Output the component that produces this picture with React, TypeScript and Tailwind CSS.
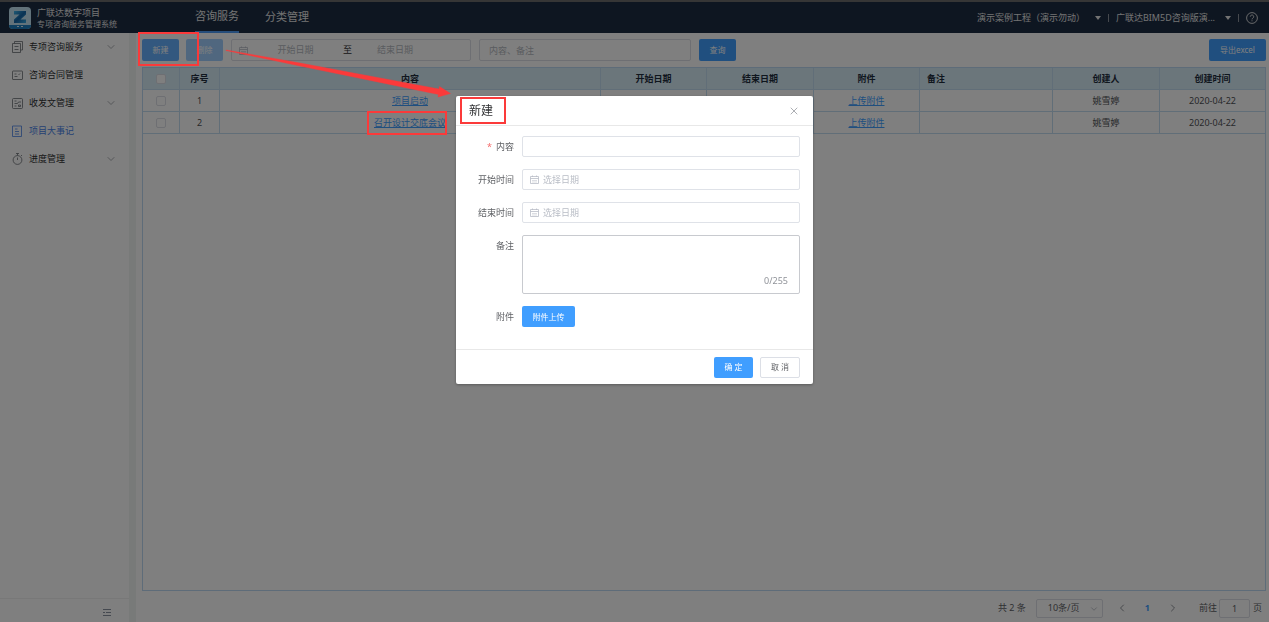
import type { ReactNode } from "react";
import { ChevronDown, ChevronLeft, ChevronRight, X } from "lucide-react";

const menu = [
  { label: "专项咨询服务", icon: "copy", children: true },
  { label: "咨询合同管理", icon: "contract", children: false },
  { label: "收发文管理", icon: "files", children: true },
  { label: "项目大事记", icon: "note", children: false, active: true },
  { label: "进度管理", icon: "timer", children: true },
];

const rows = [
  { id: 1, content: "项目启动", creator: "姚雪婷", created: "2020-04-22" },
  { id: 2, content: "召开设计交底会议", creator: "姚雪婷", created: "2020-04-22" },
];

const icons: Record<string, ReactNode> = {
  copy: (
    <>
      <path d="M3.500 2.500v-2h8v8.500h-2M1.500 2.500h8v9h-8z" />
      <path d="M3.500 5.500h4M3.500 8.500h4" />
    </>
  ),
  contract: (
    <>
      <rect x="1.5" y="2" width="10" height="8.500" rx=".5" />
      <path d="M3.500 5h2M3.500 7.500h3M7.500 6l1.500-1.500" />
    </>
  ),
  files: (
    <>
      <rect x="1.5" y="1.5" width="10" height="10" rx="1" />
      <path d="M3.500 4h2M3.500 6.500h3l1-1.500h2.500M7.500 8h2v1.500h-2zM3.500 9h2" />
    </>
  ),
  note: (
    <>
      <path d="M1.500 1h9v10.500h-9z" />
      <path d="M4 4h2.500M4 6.500h4M4 9h4" />
    </>
  ),
  timer: (
    <>
      <circle cx="6.500" cy="7" r="4.400" />
      <path d="M5 .5h3M6.500 .5v2M6.500 4.500V7M10 3l1-1" />
    </>
  ),
};

function MenuIcon({ name }: { name: string }) {
  return (
    <svg viewBox="0 0 12 12" className="size-3 shrink-0" fill="none" stroke="currentColor" strokeWidth="0.8">
      {icons[name]}
    </svg>
  );
}

function CalendarIcon() {
  return (
    <svg viewBox="0 0 9 9" className="size-[9px] shrink-0 text-[#b9bdc6]" fill="none" stroke="currentColor" strokeWidth="0.8">
      <path d="M.5 1.500h8v7h-8zM.5 3.500h8M2.500.5v1.500M6.500.5v1.500" />
      <path d="M2 5.500h5M2 7h5" strokeWidth="0.5" />
    </svg>
  );
}

function Logo() {
  return (
    <svg viewBox="0 0 22 22" className="size-[22px] shrink-0">
      <defs>
        <linearGradient id="logo-z" x1="0" y1="0" x2="1" y2="1">
          <stop offset="0" stopColor="#3fb4ea" />
          <stop offset="0.5" stopColor="#1565a8" />
          <stop offset="1" stopColor="#35a9e2" />
        </linearGradient>
      </defs>
      <rect width="22" height="22" rx="4" fill="#c4e4f4" />
      <path d="M0 18h22a4 4 0 0 1-4 4H4a4 4 0 0 1-4-4z" fill="#1c7fc0" />
      <path d="M5 4h12v3.500L11.500 12.500H17V16H5v-3.500L10.500 7.500H5z" fill="url(#logo-z)" />
      <path d="M8 19.500h2M12 19.500h2" stroke="#d8effa" />
    </svg>
  );
}

function Caret() {
  return (
    <svg viewBox="0 0 6 4" className="h-1 w-[6px]" fill="currentColor">
      <path d="M0 0h6L3 4z" />
    </svg>
  );
}

function Header() {
  return (
    <header className="flex h-[33px] shrink-0 items-center border-t-2 border-[#6c6c6c] bg-[#1c2c42] pr-[11px] pl-[9px] text-[#e6e6e6]">
      <Logo />
      <div className="ml-[6px] w-[158px]">
        <div className="text-[9px] leading-[12px]">广联达数字项目</div>
        <div className="text-[8px] leading-[10px]">专项咨询服务管理系统</div>
      </div>
      <nav className="flex h-full gap-[26px] text-[11px]">
        <a href="#service" className="flex items-center border-b-2 border-[#4c9bf5]">咨询服务</a>
        <a href="#category" className="flex items-center">分类管理</a>
      </nav>
      <div className="ml-auto flex items-center text-[9px]">
        <button type="button" className="flex items-center gap-[10px]">
          演示案例工程（演示勿动）
          <Caret />
        </button>
        <span className="mx-[7px] h-2 w-px bg-[#8c939c]" />
        <button type="button" className="flex items-center gap-[10px]">
          广联达BIM5D咨询版演...
          <Caret />
        </button>
        <span className="mx-[7px] h-2 w-px bg-[#8c939c]" />
        <button type="button" aria-label="帮助">
          <svg viewBox="0 0 12 12" className="size-3" fill="none" stroke="currentColor" strokeWidth="0.9">
            <circle cx="6" cy="6" r="5.400" />
            <path d="M4.300 4.700a1.700 1.700 0 1 1 2.600 1.400c-.6.400-.9.700-.9 1.300M6 8.300v1" />
          </svg>
        </button>
      </div>
    </header>
  );
}

function Sidebar() {
  return (
    <aside className="flex w-[136px] shrink-0 flex-col border-r-[7px] border-[#f0f4f2]">
      <nav className="flex-1 text-[9px] text-[#303133]">
        {menu.map((item) => (
          <a
            key={item.label}
            href="#menu"
            className={`flex h-7 items-center gap-[6px] pr-3 pl-[11px] ${item.active ? "text-[#4a83e8]" : ""}`}
          >
            <span className={item.active ? "" : "text-[#6b6e73]"}>
              <MenuIcon name={item.icon} />
            </span>
            {item.label}
            {item.children && <ChevronDown className="ml-auto size-3 text-[#909399]" strokeWidth={1.5} />}
          </a>
        ))}
      </nav>
      <div className="flex h-6 items-center justify-end border-t border-[#f0f0f0] pt-[3px] pr-[18px]">
        <button type="button" aria-label="收起菜单">
          <svg viewBox="0 0 8 7" className="h-[7px] w-2" fill="none" stroke="#8a93a0">
            <path d="M0 .5h8M3 3.500h5M0 6.500h8M0 3.500h2" />
          </svg>
        </button>
      </div>
    </aside>
  );
}

function Toolbar() {
  return (
    <div className="flex h-[22px] items-center text-[9px]">
      <button type="button" className="h-full w-[37px] rounded-xs bg-[#66b1ff] text-[8px] text-white">新建</button>
      <button type="button" disabled className="ml-[7px] h-full w-[37px] rounded-xs bg-[#a0cfff] text-[8px] text-white">
        删除
      </button>
      <div className="ml-2 flex h-full w-[240px] items-center rounded-xs border border-[#dcdfe6] px-[7px]">
        <CalendarIcon />
        <input aria-label="开始日期" placeholder="开始日期" className="w-[95px] text-center placeholder:text-[#b4b8c0]" />
        <span className="w-2 text-[#303133]">至</span>
        <input aria-label="结束日期" placeholder="结束日期" className="w-[88px] text-center placeholder:text-[#b4b8c0]" />
      </div>
      <input
        aria-label="内容、备注"
        placeholder="内容、备注"
        className="ml-2 h-full w-[212px] rounded-xs border border-[#dcdfe6] px-[9px] placeholder:text-[#b4b8c0]"
      />
      <button type="button" className="ml-2 h-full w-[37px] rounded-xs bg-[#409eff] text-[8px] text-white">查询</button>
      <button type="button" className="ml-auto h-full w-[57px] rounded-xs bg-[#409eff] text-[8px] text-white">
        导出excel
      </button>
    </div>
  );
}

const cell = "h-[22px] border-r border-b border-[#c3dcf0] p-0";

function Check({ label }: { label: string }) {
  return (
    <input
      type="checkbox"
      aria-label={label}
      className="mx-auto block size-[10px] appearance-none rounded-xs border border-[#dcdfe6] bg-white"
    />
  );
}

function EventTable() {
  return (
    <div className="mt-[6px] flex-1 border border-[#bcd9f2]">
      <table className="w-full table-fixed border-separate border-spacing-0 text-center text-[9px] text-[#505256]">
        <colgroup>
          <col className="w-[37px]" />
          <col className="w-[40px]" />
          <col />
          <col className="w-[106px]" />
          <col className="w-[107px]" />
          <col className="w-[106px]" />
          <col className="w-[133px]" />
          <col className="w-[107px]" />
          <col className="w-[105px]" />
        </colgroup>
        <thead className="bg-[#d6ecf7] text-[#1f2d3d]">
          <tr>
            <th className={cell}><Check label="全选" /></th>
            <th className={cell}>序号</th>
            <th className={cell}>内容</th>
            <th className={cell}>开始日期</th>
            <th className={cell}>结束日期</th>
            <th className={cell}>附件</th>
            <th className="h-[22px] border-r border-b border-[#c3dcf0] p-0 pl-[7px] text-left">备注</th>
            <th className={cell}>创建人</th>
            <th className="h-[22px] border-b border-[#c3dcf0] p-0">创建时间</th>
          </tr>
        </thead>
        <tbody>
          {rows.map((row) => (
            <tr key={row.id}>
              <td className={cell}><Check label={`选择第${row.id}行`} /></td>
              <td className={cell}>{row.id}</td>
              <td className={cell}><a href="#detail" className="text-[#409eff] underline">{row.content}</a></td>
              <td className={cell} />
              <td className={cell} />
              <td className={cell}><a href="#upload" className="text-[#409eff] underline">上传附件</a></td>
              <td className={cell} />
              <td className={cell}>{row.creator}</td>
              <td className="h-[22px] border-b border-[#c3dcf0] p-0">{row.created}</td>
            </tr>
          ))}
        </tbody>
      </table>
    </div>
  );
}

function Pagination() {
  return (
    <div className="flex h-[31px] items-center justify-end pt-[3px] pr-1 text-[9px] text-[#606266]">
      <span>共 2 条</span>
      <div className="relative ml-[10px]">
        <select
          aria-label="每页条数"
          className="block h-[19px] w-[67px] appearance-none rounded-xs border border-[#dcdfe6] pl-[11px]"
        >
          <option>10条/页</option>
        </select>
        <ChevronDown className="pointer-events-none absolute top-[5px] right-1 size-[10px] text-[#b4b8c0]" />
      </div>
      <button type="button" aria-label="上一页" className="ml-[13px]"><ChevronLeft className="size-3 text-[#909399]" /></button>
      <button type="button" className="mx-[17px] font-bold text-[#409eff]">1</button>
      <button type="button" aria-label="下一页"><ChevronRight className="size-3 text-[#909399]" /></button>
      <label className="ml-5 flex items-center gap-[2px]">
        前往
        <input defaultValue="1" className="h-[19px] w-[31px] rounded-xs border border-[#dcdfe6] text-center" />
        <span className="ml-px">页</span>
      </label>
    </div>
  );
}

function Field({ id, label, required, children }: { id: string; label: string; required?: boolean; children: ReactNode }) {
  return (
    <div className="flex items-start">
      <label htmlFor={id} className="w-[66px] shrink-0 pr-2 text-right leading-[21px]">
        {required && <span className="mr-1 text-[#f56c6c]">*</span>}
        {label}
      </label>
      {children}
    </div>
  );
}

function DateInput({ id }: { id: string }) {
  return (
    <div className="flex h-[21px] flex-1 items-center gap-1 rounded-xs border border-[#dfe2e8] px-[7px]">
      <CalendarIcon />
      <input id={id} placeholder="选择日期" className="min-w-0 flex-1 placeholder:text-[#b9bdc6]" />
    </div>
  );
}

function CreateDialog() {
  return (
    <div className="fixed inset-0 flex items-start justify-center bg-black/50 pt-24">
      <form
        role="dialog"
        aria-label="新建"
        className="w-[357px] rounded-xs bg-white text-[9px] text-[#606266] shadow-[0_1px_3px_rgba(0,0,0,0.3)]"
      >
        <div className="flex h-[30px] items-center justify-between border-b border-[#e8e8e8] px-[13px]">
          <h2 className="text-[12px] text-[#303133]">新建</h2>
          <button type="button" aria-label="关闭"><X className="size-3 text-[#909399]" strokeWidth={1.5} /></button>
        </div>
        <div className="flex flex-col gap-3 pt-[10px] pr-[13px] pb-[22px]">
          <Field id="content" label="内容" required>
            <input id="content" className="h-[21px] min-w-0 flex-1 rounded-xs border border-[#dfe2e8] px-2" />
          </Field>
          <Field id="start" label="开始时间"><DateInput id="start" /></Field>
          <Field id="end" label="结束时间"><DateInput id="end" /></Field>
          <Field id="remark" label="备注">
            <div className="relative flex-1">
              <textarea id="remark" className="block h-[59px] w-full resize-none rounded-xs border border-[#c8cacf] p-2" />
              <span className="absolute right-3 bottom-[7px] leading-[12px] text-[#909399]">0/255</span>
            </div>
          </Field>
          <Field id="upload" label="附件">
            <button id="upload" type="button" className="h-[21px] w-[53px] rounded-xs bg-[#409eff] text-[8px] text-white">
              附件上传
            </button>
          </Field>
        </div>
        <div className="flex h-[35px] items-center justify-end gap-[7px] border-t border-[#e8e8e8] pr-[13px] text-[8px]">
          <button type="button" className="h-[21px] w-[39px] rounded-xs bg-[#409eff] text-white">确 定</button>
          <button type="button" className="h-[21px] w-10 rounded-xs border border-[#dcdfe6]">取 消</button>
        </div>
      </form>
    </div>
  );
}

function Annotations() {
  return (
    <svg className="pointer-events-none absolute top-0 left-0" width="520" height="140" fill="none" stroke="#fb3a3a" strokeWidth="2">
      <rect x="139" y="33" width="59" height="32" />
      <rect x="368" y="112" width="78" height="22" />
      <rect x="461" y="98" width="44" height="25" />
      <path d="M226 50L300 63l139 26 .5-2.500 11 7-12.500 3.500.5-2.500-138.500-28.500-74-15.500z" fill="#fb3a3a" stroke="#fb3a3a" strokeWidth="0.4" />
    </svg>
  );
}

export default function App() {
  return (
    <div className="relative flex min-h-screen flex-col bg-white font-['Noto_Sans','Noto_Sans_CJK_SC',sans-serif]">
      <Header />
      <div className="flex flex-1">
        <Sidebar />
        <main className="flex min-w-0 flex-1 flex-col pt-[6px] pr-[3px] pl-[6px]">
          <Toolbar />
          <EventTable />
          <Pagination />
        </main>
      </div>
      <CreateDialog />
      <Annotations />
    </div>
  );
}
